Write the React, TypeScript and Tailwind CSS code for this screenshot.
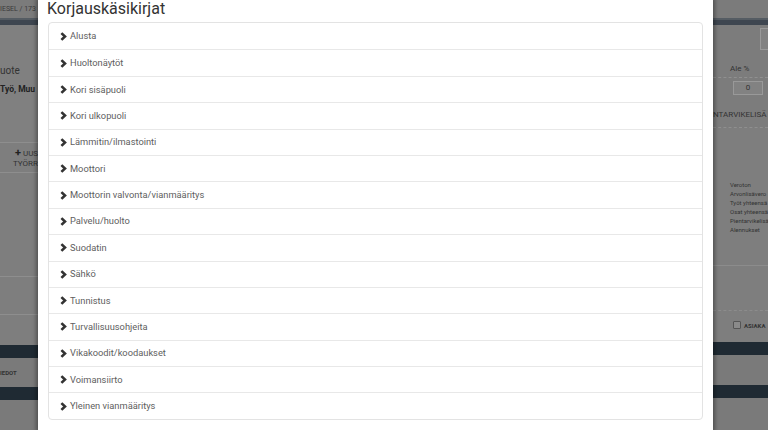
import React from "react";

const items = [
  "Alusta",
  "Huoltonäytöt",
  "Kori sisäpuoli",
  "Kori ulkopuoli",
  "Lämmitin/ilmastointi",
  "Moottori",
  "Moottorin valvonta/vianmääritys",
  "Palvelu/huolto",
  "Suodatin",
  "Sähkö",
  "Tunnistus",
  "Turvallisuusohjeita",
  "Vikakoodit/koodaukset",
  "Voimansiirto",
  "Yleinen vianmääritys",
];

function Chevron() {
  return (
    <svg width="7" height="9" viewBox="0 0 7 9" className="shrink-0">
      <path d="M1.4 1.1 L5 4.5 L1.4 7.9" fill="none" stroke="#333" strokeWidth="2.6" strokeLinejoin="miter" />
    </svg>
  );
}

export default function App() {
  const font = { fontFamily: "Roboto, 'Liberation Sans', sans-serif" };
  return (
    <div className="relative w-[768px] h-[430px] overflow-hidden bg-[#7e7e7e] flex justify-between" style={font}>
      {/* left strip of page behind */}
      <div className="w-[38px] flex flex-col text-[#2a2a2a] overflow-hidden">
        <div className="h-[18px] bg-[#7b7b7b] flex items-center whitespace-nowrap text-[7px] text-[#3a3a3a]">IESEL / 173</div>
        <div className="h-[7px] bg-[#3e4650] border-t-2 border-[#555c63]"></div>
        <div className="h-[38px] bg-[#808080]"></div>
        <div className="h-[15px] bg-[#808080] text-[10px] whitespace-nowrap leading-[15px] text-[#333]">uote</div>
        <div className="h-[22px] bg-[#808080] text-[8.5px] font-bold whitespace-nowrap leading-[22px] text-[#222]">Työ, Muu</div>
        <div className="h-[43px] bg-[#808080] border-b border-[#8e8e8e]"></div>
        <div className="h-[30px] bg-[#7e7e7e] border-b border-[#8e8e8e] flex flex-col text-[8px] leading-[10px] text-[#333] whitespace-nowrap pt-[5px]">
          <span className="pl-[15px]"><b className="text-[11px] text-[#222]">+</b> UUS</span>
          <span className="pl-[13px]">TYÖRR</span>
        </div>
        <div className="h-[104px] bg-[#7e7e7e] border-b border-[#8e8e8e]"></div>
        <div className="h-[38px] bg-[#7e7e7e] border-b border-[#8e8e8e]"></div>
        <div className="h-[30px] bg-[#7e7e7e]"></div>
        <div className="h-[13px] bg-[#1f2a33]"></div>
        <div className="h-[29px] bg-[#7a7a7a] text-[6px] font-bold leading-[29px] text-[#333]">IEDOT</div>
        <div className="h-[13px] bg-[#1f2a33]"></div>
        <div className="flex-1 bg-[#7a7a7a]"></div>
      </div>

      {/* right strip of page behind */}
      <div className="w-[55px] flex flex-col text-[#2a2a2a] overflow-hidden">
        <div className="h-[18px] bg-[#7b7b7b]"></div>
        <div className="h-[7px] bg-[#3e4650] border-t-2 border-[#555c63]"></div>
        <div className="h-[36px] bg-[#7c7c7c] flex items-start pt-[3px] justify-end">
          <div className="w-[8px] h-[22px] border border-r-0 border-[#9a9a9a] bg-[#828282]"></div>
        </div>
        <div className="h-[17px] bg-[#7c7c7c] border-b border-dashed border-[#909090] text-[8px] leading-[16px] pl-[17px] text-[#333]">Ale %</div>
        <div className="h-[24px] bg-[#7c7c7c] pl-[20px] pt-[3px]">
          <div className="w-[30px] h-[14px] border border-[#999] bg-[#828282] text-[8px] leading-[12px] text-center text-[#333]">0</div>
        </div>
        <div className="h-[26px] bg-[#7c7c7c] border-b border-dashed border-[#8f8f8f] text-[8px] leading-[26px] whitespace-nowrap text-[#333]">NTARVIKELISÄ</div>
        <div className="h-[52px] bg-[#7e7e7e]"></div>
        <div className="flex flex-col pl-[17px] text-[6px] leading-[9px] text-[#333] whitespace-nowrap">
          <span>Veroton</span>
          <span>Arvonlisävero</span>
          <span>Työt yhteensä</span>
          <span>Osat yhteensä</span>
          <span>Pientarvikelisä</span>
          <span>Alennukset</span>
        </div>
        <div className="h-[32px] border-b border-[#8c8c8c]"></div>
        <div className="h-[45px] border-b border-dashed border-[#8c8c8c]"></div>
        <div className="h-[31px] flex items-center pl-[20px] gap-[3px] pb-[3px]">
          <div className="w-[8px] h-[8px] border border-[#555] bg-[#8a8a8a] rounded-[1px]"></div>
          <span className="text-[6px] font-bold text-[#333] whitespace-nowrap">ASIAKA</span>
        </div>
        <div className="h-[13px] bg-[#1f2a33]"></div>
        <div className="h-[30px] bg-[#7a7a7a]"></div>
        <div className="h-[13px] bg-[#1f2a33]"></div>
        <div className="flex-1 bg-[#7a7a7a]"></div>
      </div>

      {/* modal */}
      <div className="absolute left-[38px] top-0 w-[675px] h-[430px] bg-white shadow-[0_0_4px_2px_rgba(0,0,0,0.35)] flex flex-col">
        <div className="h-[22px] pl-[9px] text-[16px] leading-[18px] text-[#333]">Korjauskäsikirjat</div>
        <div className="mx-[10px] border border-[#e3e3e3] rounded-[4px] flex flex-col">
          {items.map((t, i) => (
            <div
              key={t}
              className={
                "h-[26.4px] flex items-center gap-[3px] pl-[11px] text-[9.3px] text-[#606060] " +
                (i > 0 ? "border-t border-[#e8e8e8]" : "")
              }
            >
              <Chevron />
              <span>{t}</span>
            </div>
          ))}
        </div>
      </div>
    </div>
  );
}
